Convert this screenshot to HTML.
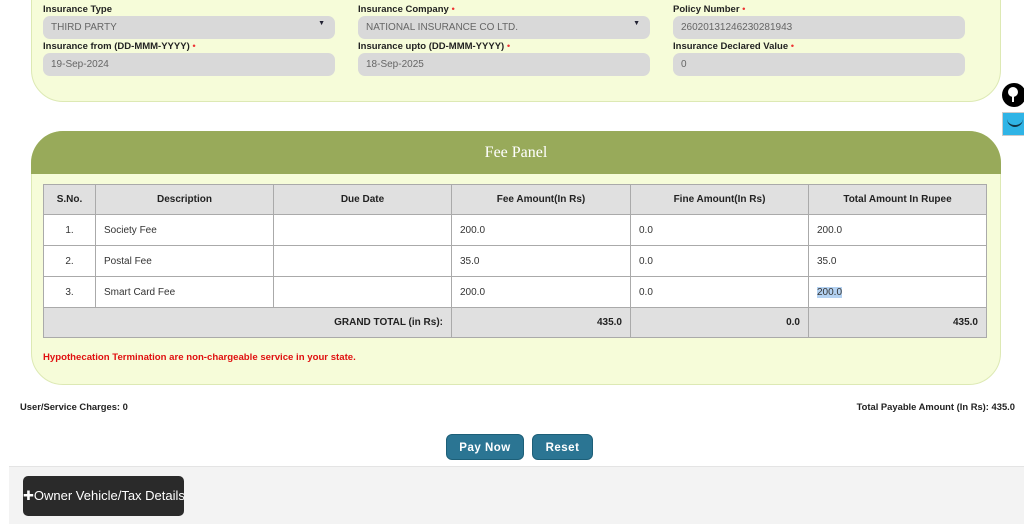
<!DOCTYPE html>
<html><head><style>
*{margin:0;padding:0;box-sizing:border-box}
body{width:1024px;height:524px;overflow:hidden;background:#fff;font-family:"Liberation Sans",Arial,sans-serif;position:relative}
.abs{position:absolute}
.panel1{left:31px;top:-40px;width:970px;height:142px;background:#f6fcd9;border:1px solid #dde9b4;border-radius:0 0 32px 32px}
.lbl{position:absolute;font-size:9.5px;font-weight:bold;color:#222}
.lbl i{color:#e33;font-style:normal;font-weight:normal}
.inp{position:absolute;height:23px;background:#d9d9d9;border-radius:7px;font-size:10px;color:#666;padding:6px 0 0 8px}
.inp .car{position:absolute;right:10px;top:4px;font-size:7px;color:#223}
.fee{left:31px;top:131px;width:970px;height:254px;background:#f6fcd9;border:1px solid #dde9b4;border-radius:32px}
.feeh{left:31px;top:131px;width:970px;height:43px;background:#98aa5a;border-radius:32px 32px 0 0;color:#fff;font-family:"Liberation Serif",serif;font-size:16px;text-align:center;line-height:44px}
table{position:absolute;left:43px;top:184px;width:944px;border-collapse:collapse;font-size:10px;color:#333}
td{border:1px solid #aaa;height:31px;padding:0 8px;background:#fff}
tr.h td{background:#e0e0e0;font-weight:bold;text-align:center;color:#222;height:30px}
tr.g td{background:#e0e0e0;font-weight:bold;text-align:right;color:#222;height:30px}
.btn{position:absolute;top:434px;height:26px;background:#2b7593;color:#fff;font-weight:bold;font-size:11.5px;border-radius:6px;text-align:center;line-height:26px;letter-spacing:.5px;border:1px solid #1d5f78}
</style></head><body>
<div class="abs panel1"></div>
<div class="lbl" style="left:43px;top:4px">Insurance Type</div>
<div class="inp" style="left:43px;top:16px;width:292px">THIRD PARTY<span class="car">▼</span></div>
<div class="lbl" style="left:358px;top:4px">Insurance Company <i>•</i></div>
<div class="inp" style="left:358px;top:16px;width:292px">NATIONAL INSURANCE CO LTD.<span class="car">▼</span></div>
<div class="lbl" style="left:673px;top:4px">Policy Number <i>•</i></div>
<div class="inp" style="left:673px;top:16px;width:292px">26020131246230281943</div>
<div class="lbl" style="left:43px;top:41px">Insurance from (DD-MMM-YYYY) <i>•</i></div>
<div class="inp" style="left:43px;top:53px;width:292px">19-Sep-2024</div>
<div class="lbl" style="left:358px;top:41px">Insurance upto (DD-MMM-YYYY) <i>•</i></div>
<div class="inp" style="left:358px;top:53px;width:292px">18-Sep-2025</div>
<div class="lbl" style="left:673px;top:41px">Insurance Declared Value <i>•</i></div>
<div class="inp" style="left:673px;top:53px;width:292px">0</div>

<div class="abs" style="left:1002px;top:83px;width:24px;height:24px;border-radius:50%;background:#000"><div style="position:absolute;left:6px;top:4px;width:10px;height:10px;border-radius:50%;background:#fff"></div><div style="position:absolute;left:10px;top:12px;width:2px;height:7px;background:#fff"></div></div>
<div class="abs" style="left:1002px;top:112px;width:24px;height:24px;background:#2fb4e6;border:1px solid #ccc"><div style="position:absolute;left:4px;top:6px;width:16px;height:8px;border-bottom:2px solid #134;border-radius:0 0 8px 8px"></div></div>

<div class="abs fee"></div>
<div class="abs feeh">Fee Panel</div>
<table>
<tr class="h"><td style="width:52px">S.No.</td><td style="width:178px">Description</td><td style="width:178px">Due Date</td><td style="width:179px">Fee Amount(In Rs)</td><td style="width:178px">Fine Amount(In Rs)</td><td>Total Amount In Rupee</td></tr>
<tr><td style="text-align:center">1.</td><td>Society Fee</td><td></td><td>200.0</td><td>0.0</td><td>200.0</td></tr>
<tr><td style="text-align:center">2.</td><td>Postal Fee</td><td></td><td>35.0</td><td>0.0</td><td>35.0</td></tr>
<tr><td style="text-align:center">3.</td><td>Smart Card Fee</td><td></td><td>200.0</td><td>0.0</td><td><span style="background:#b4d2f2">200.0</span></td></tr>
<tr class="g"><td colspan="3">GRAND TOTAL (in Rs):</td><td>435.0</td><td>0.0</td><td>435.0</td></tr>
</table>
<div class="abs" style="left:43px;top:352px;font-size:9.6px;font-weight:bold;color:#e01010">Hypothecation Termination are non-chargeable service in your state.</div>
<div class="abs" style="left:20px;top:401px;font-size:9.4px;font-weight:bold;color:#222">User/Service Charges: 0</div>
<div class="abs" style="right:9px;top:401px;font-size:9.4px;font-weight:bold;color:#222">Total Payable Amount (In Rs): 435.0</div>
<div class="btn" style="left:446px;width:78px">Pay Now</div>
<div class="btn" style="left:532px;width:61px">Reset</div>
<div class="abs" style="left:9px;top:466px;width:1015px;height:58px;background:#f3f3f3;border-top:1px solid #e4e4e4"></div>
<div class="abs" style="left:23px;top:476px;width:161px;height:40px;background:#2a2a2a;border-radius:5px;color:#fff;font-size:13px;line-height:40px;white-space:nowrap;overflow:hidden">✚Owner Vehicle/Tax Details</div>
</body></html>
